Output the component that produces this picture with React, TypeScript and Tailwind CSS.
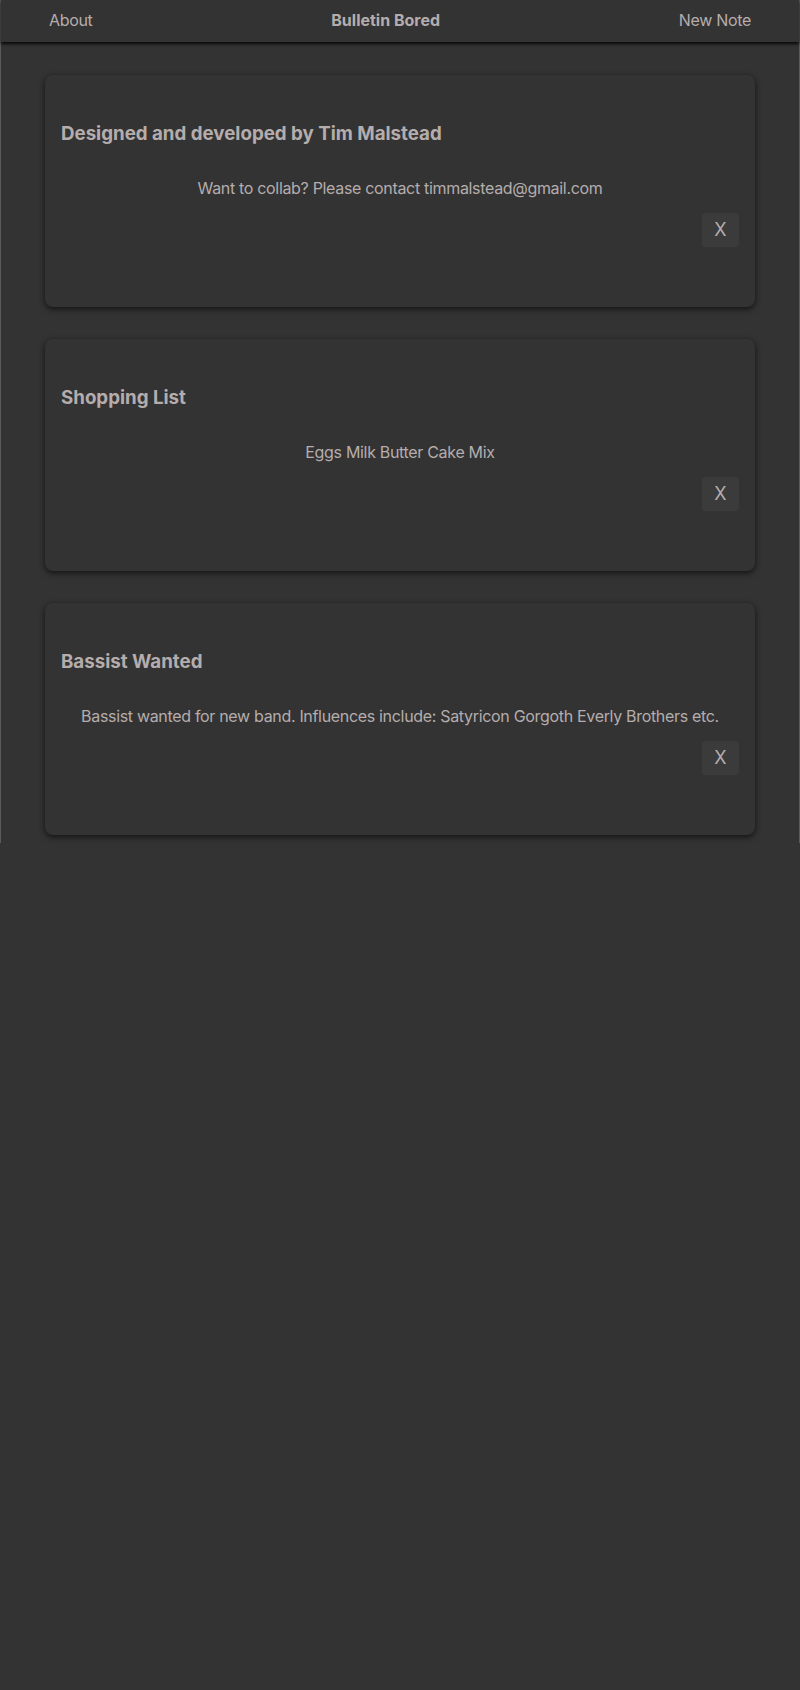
import { useState } from "react";

type Note = {
  id: number;
  title: string;
  body: string;
};

const initialNotes: Note[] = [
  {
    id: 1,
    title: "Designed and developed by Tim Malstead",
    body: "Want to collab? Please contact timmalstead@gmail.com",
  },
  { id: 2, title: "Shopping List", body: "Eggs Milk Butter Cake Mix" },
  {
    id: 3,
    title: "Bassist Wanted",
    body: "Bassist wanted for new band. Influences include: Satyricon Gorgoth Everly Brothers etc.",
  },
];

function NoteCard({ note, onRemove }: { note: Note; onRemove: () => void }) {
  return (
    <div className="mx-[44px] flex h-[232px] flex-col rounded-lg bg-[#333333] px-4 pt-[47px] shadow-[0_2px_6px_rgba(0,0,0,0.65)]">
      <h3 className="text-[18.72px] font-bold leading-[23px]">{note.title}</h3>
      <p className="mt-[33px] text-center text-base leading-5 tracking-[-0.02em]">{note.body}</p>
      <div className="mt-[15px] flex justify-end">
        <button
          className="flex h-[34px] w-[37px] items-center justify-center rounded bg-[#3b3b3b] text-lg text-[#b5adad]"
          onClick={onRemove}
        >
          X
        </button>
      </div>
    </div>
  );
}

export default function App() {
  const [notes, setNotes] = useState<Note[]>(initialNotes);

  return (
    <div className="min-h-[1690px] bg-[#333333] font-['Inter',sans-serif] text-[#b5adad]">
      <div className="border-x border-[#5a5a5a] pb-2">
        <nav className="flex h-[42px] items-center justify-between bg-[#333333] px-12 pb-[2px] text-base tracking-[-0.02em] shadow-[0_2px_3px_rgba(0,0,0,0.85)]">
          <span>About</span>
          <span className="font-bold tracking-normal">Bulletin Bored</span>
          <span>New Note</span>
        </nav>
        <div className="flex flex-col gap-8 pt-[33px]">
          {notes.map((note) => (
            <NoteCard
              key={note.id}
              note={note}
              onRemove={() => setNotes((prev) => prev.filter((n) => n.id !== note.id))}
            />
          ))}
        </div>
      </div>
    </div>
  );
}
